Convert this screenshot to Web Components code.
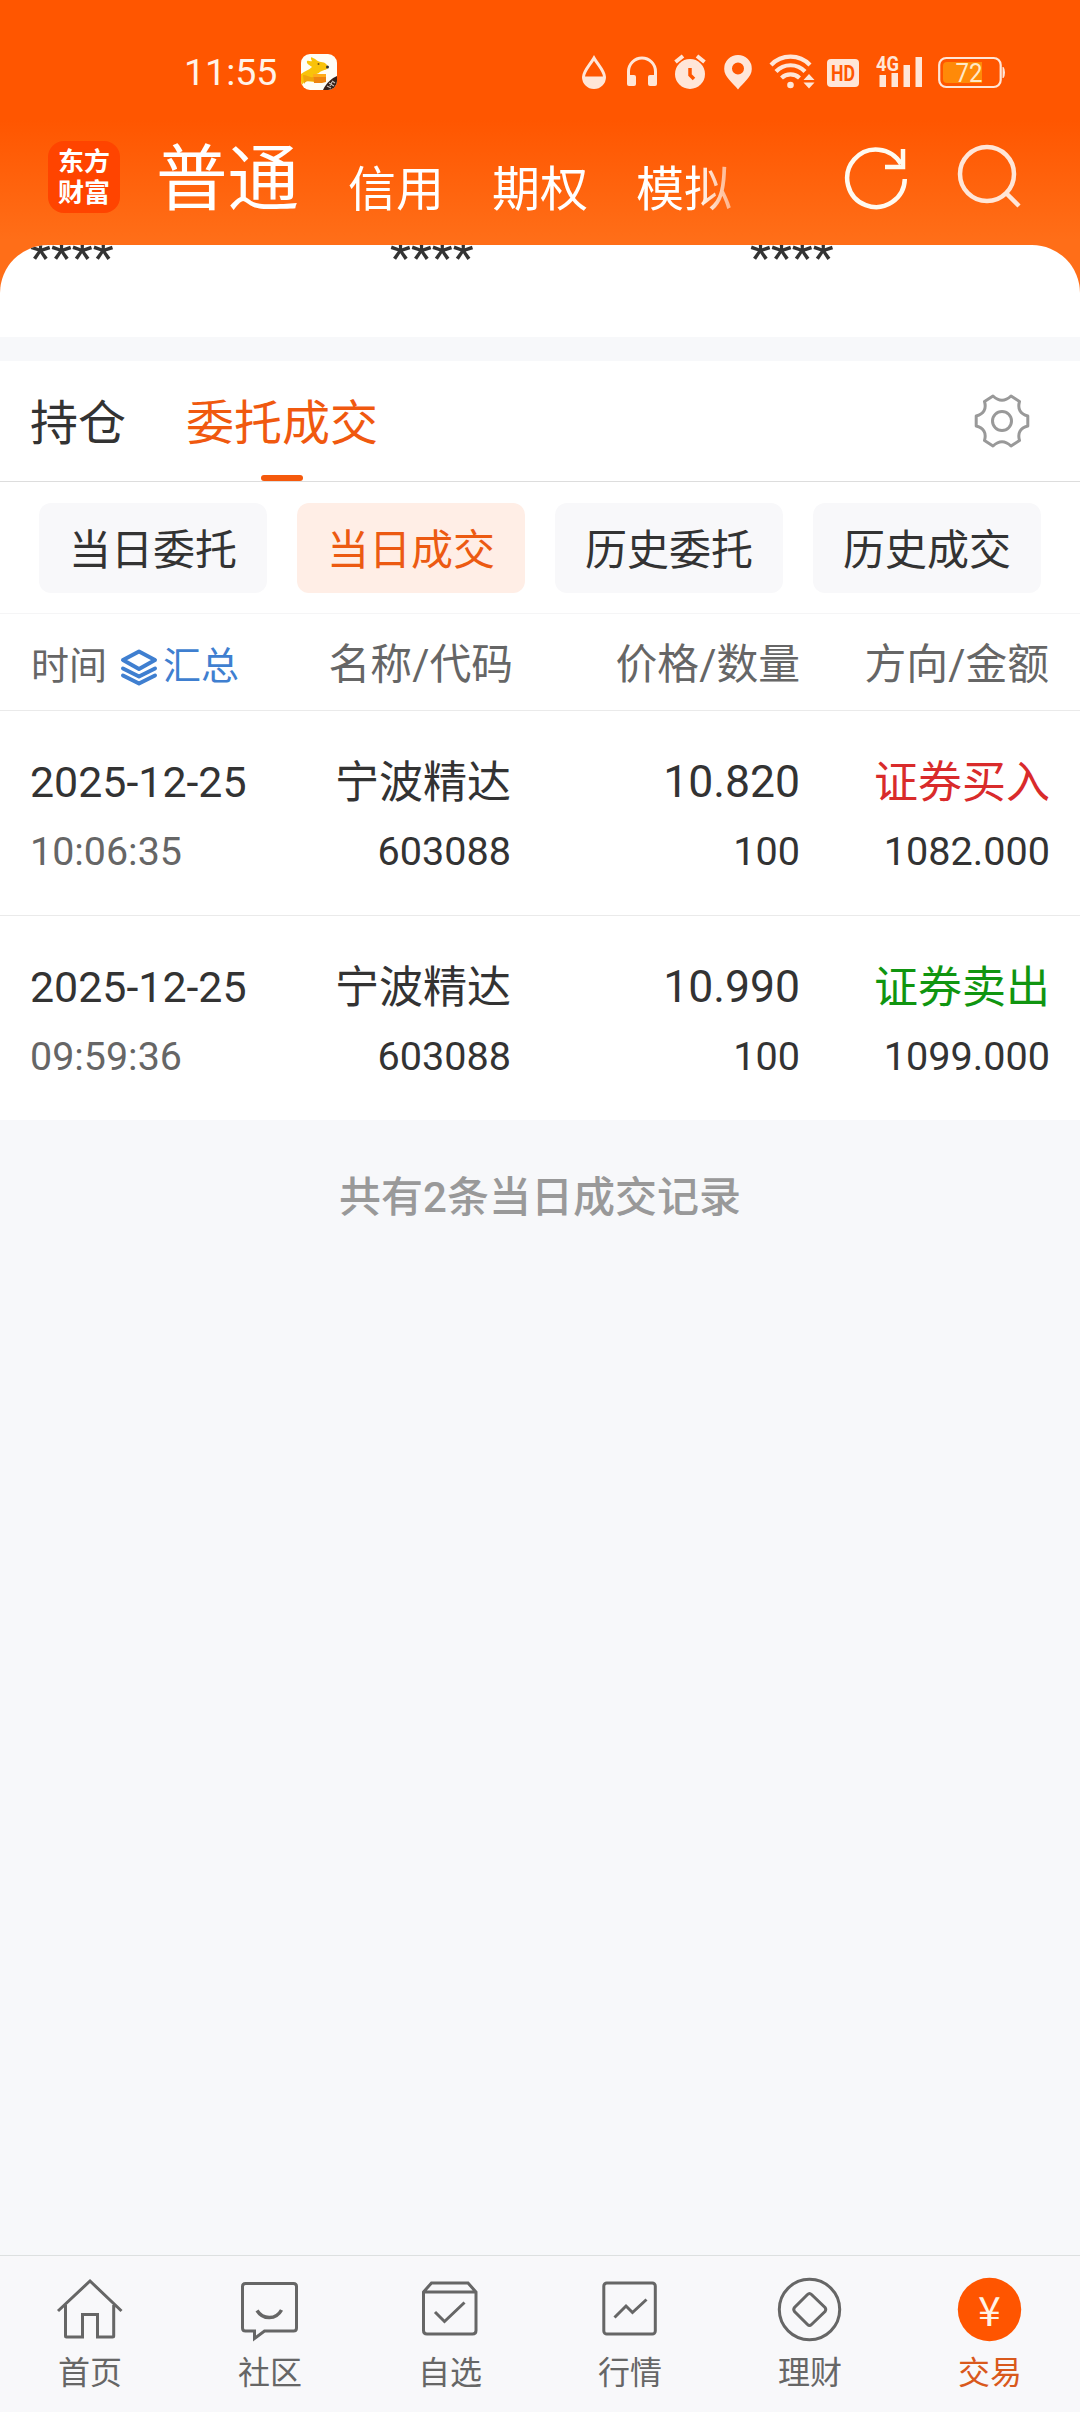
<!DOCTYPE html>
<html lang="zh-CN">
<head>
<meta charset="UTF-8">
<meta name="viewport" content="width=device-width, initial-scale=1.0">
<title>交易</title>
<style>
    body {
        margin: 0;
        background: #f7f8fa;
        color: #333;
        font-family: Roboto, "Noto Sans CJK SC", sans-serif;
    }
</style>
</head>
<body>
<trade-app>
    <status-bar slot="top"></status-bar>
    <account-bar slot="top">
        <account-tab active>普通</account-tab>
        <account-tab>信用</account-tab>
        <account-tab>期权</account-tab>
        <account-tab>模拟</account-tab>
    </account-bar>

    <asset-card>
        <span>****</span>
        <span>****</span>
        <span>****</span>
    </asset-card>

    <section-tabs>
        <section-tab>持仓</section-tab>
        <section-tab active>委托成交</section-tab>
    </section-tabs>

    <filter-bar>
        <filter-chip>当日委托</filter-chip>
        <filter-chip active>当日成交</filter-chip>
        <filter-chip>历史委托</filter-chip>
        <filter-chip>历史成交</filter-chip>
    </filter-bar>

    <trade-head></trade-head>

    <trade-row side="buy">
        <span slot="date">2025-12-25</span>
        <span slot="time">10:06:35</span>
        <span slot="name">宁波精达</span>
        <span slot="code">603088</span>
        <span slot="price">10.820</span>
        <span slot="count">100</span>
        <span slot="side">证券买入</span>
        <span slot="amount">1082.000</span>
    </trade-row>
    <trade-row side="sell">
        <span slot="date">2025-12-25</span>
        <span slot="time">09:59:36</span>
        <span slot="name">宁波精达</span>
        <span slot="code">603088</span>
        <span slot="price">10.990</span>
        <span slot="count">100</span>
        <span slot="side">证券卖出</span>
        <span slot="amount">1099.000</span>
    </trade-row>

    <list-summary>共有2条当日成交记录</list-summary>

    <bottom-nav slot="bottom">
        <nav-item icon="home">首页</nav-item>
        <nav-item icon="chat">社区</nav-item>
        <nav-item icon="box">自选</nav-item>
        <nav-item icon="chart">行情</nav-item>
        <nav-item icon="coin">理财</nav-item>
        <nav-item icon="trade" active>交易</nav-item>
    </bottom-nav>
</trade-app>

<script>
// Small helper: every element here only needs an open root with static markup
class BaseElement extends HTMLElement {
    constructor() {
        super();
        this.attachShadow({ mode: 'open' });
        this.shadowRoot.innerHTML = this.render();
    }

    render() {
        return '<slot></slot>';
    }
}

class TradeApp extends BaseElement {
    render() {
        return `
            <style>
                :host {
                    display: flex;
                    flex-direction: column;
                    height: 2412px;
                    overflow: hidden;
                }
                header {
                    height: 245px;
                    padding-bottom: 55px;
                    background: linear-gradient(#ff5600 0, #ff5600 120px, #ff6e18 240px, #ff6e18);
                }
                main {
                    flex: 1;
                    margin-top: -55px;
                }
            </style>
            <header><slot name="top"></slot></header>
            <main><slot></slot></main>
            <slot name="bottom"></slot>
        `;
    }
}
customElements.define('trade-app', TradeApp);

class StatusBar extends BaseElement {
    render() {
        return `
            <style>
                :host {
                    display: flex;
                    align-items: center;
                    height: 36px;
                    padding: 54px 74px 30px 184px;
                    color: #ffe6d8;
                }
                time {
                    width: 117px;
                    font-size: 37.5px;
                    line-height: 38px;
                    color: #fff3e8;
                }
                .icons {
                    display: flex;
                    margin-left: auto;
                }
                svg {
                    display: block;
                    height: 36px;
                    fill: currentColor;
                }
                .line {
                    fill: none;
                    stroke: currentColor;
                }
                .cut {
                    fill: none;
                    stroke: #ff5600;
                }
            </style>
            <time>11:55</time>
            <svg width="36" viewBox="0 0 36 36">
                <clipPath id="app"><rect width="36" height="36" rx="9"/></clipPath>
                <g clip-path="url(#app)">
                    <rect width="36" height="36" fill="#fffdf6"/>
                    <path fill="#f9c20a" d="M0 20C4 17 8 16 11 13C9 11 5 10 6 7C8 6 9 8 11 7C9 4 10 2 12 4C15 5 17 8 20 8C24 8 27 11 27 14C24 17 20 16 18 19L13 21L14 28L4 27L0 32Z"/>
                    <path fill="#f0a30c" d="M2 21C6 21 9 24 12 23L13 27C8 27 5 26 3 30Z"/>
                    <path fill="#ee8410" d="M12 20H25V28L21 29H13Z"/>
                    <path fill="#ffab1a" d="M12 20H25V23H12Z"/>
                    <circle cx="17.500" cy="10" r="1" fill="#7a5210"/>
                    <circle cx="26.500" cy="13" r="1.500" fill="#333"/>
                    <path fill="#352018" d="M22 36C25 29 31 24 36 22V36Z"/>
                    <path stroke="#c9beb6" stroke-width="1.200" d="M26 32L30 34M28 29L33 32M31 27L34 29M29 32L31 28"/>
                </g>
            </svg>
            <div class="icons">
                <!-- drop -->
                <svg width="45" viewBox="580 54 45 36">
                    <path class="line" stroke-width="3" d="M594 58C590 65 583.500 71 583.500 77A10.500 10.500 0 0 0 604.500 77C604.500 71 598 65 594 58Z"/>
                    <path d="M584 76.500H604A10 10.500 0 0 1 584 76.500Z"/>
                </svg>
                <!-- headphones -->
                <svg width="48" viewBox="625 54 48 36">
                    <path class="line" stroke-width="3" d="M628.500 82V71.500A13.500 13.500 0 0 1 655.500 71.500V82"/>
                    <rect x="627" y="75" width="9" height="11" rx="2"/>
                    <rect x="648" y="75" width="9" height="11" rx="2"/>
                </svg>
                <!-- alarm -->
                <svg width="49" viewBox="673 54 49 36">
                    <circle cx="690" cy="74" r="15"/>
                    <path class="line" stroke-width="4" d="M675.500 62L683 56M704.500 62L697 56"/>
                    <path class="cut" stroke-width="3.500" d="M690 68V75L694 79"/>
                </svg>
                <!-- location -->
                <svg width="46" viewBox="722 54 46 36">
                    <path fill-rule="evenodd" d="M738 55A13.800 13.800 0 0 1 751.800 69C751.800 77 743 83 738 89.500C733 83 724.200 77 724.200 69A13.800 13.800 0 0 1 738 55ZM738 62.500A6 6 0 1 0 738 74.500A6 6 0 1 0 738 62.500Z"/>
                </svg>
                <!-- wifi -->
                <svg width="57" viewBox="768 54 57 36">
                    <path class="line" stroke-width="4.200" d="M771 65A27 27 0 0 1 810 65M776 71.500A20 20 0 0 1 805 71.500M781.500 78A13 13 0 0 1 799.500 78"/>
                    <circle cx="790.500" cy="85" r="3.300"/>
                    <path d="M809 74L814.500 80H803.500ZM809 88.500L814.500 82.500H803.500Z"/>
                </svg>
                <!-- HD -->
                <svg width="49" viewBox="825 54 49 36">
                    <rect x="827" y="59" width="32" height="28" rx="4"/>
                    <text x="843" y="81" text-anchor="middle" textLength="24" lengthAdjust="spacingAndGlyphs" font-size="22" font-weight="700" fill="#ff5600">HD</text>
                </svg>
                <!-- signal -->
                <svg width="63" viewBox="874 54 63 36">
                    <text x="876" y="70.500" textLength="23" lengthAdjust="spacingAndGlyphs" font-size="20.500" font-weight="700">4G</text>
                    <path d="M879.500 75h6.500v12h-6.500zM891.500 73h6.500v14h-6.500zM903.500 65h6.500v22h-6.500zM915.500 57h6.500v30h-6.500z"/>
                </svg>
                <!-- battery -->
                <svg width="69" viewBox="937 54 69 36">
                    <rect class="line" stroke-width="2.200" x="939.200" y="58" width="61.500" height="29" rx="7"/>
                    <path d="M1002.500 67H1003.500Q1005 69 1005 72.500T1003.500 78H1002.500Z"/>
                    <path fill="#ff8a08" d="M947 62H982V83H947Q943 83 943 79V66Q943 62 947 62Z"/>
                    <text x="955.500" y="82" textLength="27" lengthAdjust="spacingAndGlyphs" font-size="25" fill="#ffe9c8">72</text>
                </svg>
            </div>
        `;
    }
}
customElements.define('status-bar', StatusBar);

class AccountBar extends BaseElement {
    render() {
        return `
            <style>
                :host {
                    display: flex;
                    height: 125px;
                    padding: 0 58px 0 48px;
                    color: #fff;
                }
                .logo {
                    display: flex;
                    flex-direction: column;
                    justify-content: center;
                    box-sizing: border-box;
                    width: 72px;
                    height: 72px;
                    margin: 21px 36px 0 0;
                    padding-top: 1px;
                    border-radius: 16px;
                    background: #ff4400;
                    font-size: 26px;
                    font-weight: 700;
                    line-height: 31px;
                    text-align: center;
                }
                nav {
                    display: flex;
                    align-items: baseline;
                    gap: 48px;
                    width: 624px;
                    height: 112px;
                    -webkit-mask-image: linear-gradient(90deg, #000 540px, transparent 610px);
                    mask-image: linear-gradient(90deg, #000 540px, transparent 610px);
                }
                .actions {
                    display: flex;
                    gap: 44px;
                    margin: 22px 0 0 auto;
                }
                svg {
                    width: 68px;
                    height: 68px;
                    fill: none;
                    stroke: #fffaf0;
                    stroke-width: 4.500;
                }
            </style>
            <div class="logo"><span>东方</span><span>财富</span></div>
            <nav><slot></slot></nav>
            <div class="actions">
                <svg viewBox="842 142 68 68"><path d="M904.800 179A28.800 28.800 0 1 1 901 164M903 149V167H885"/></svg>
                <svg viewBox="954 142 68 68" style="stroke:#ffe6d8"><circle cx="987" cy="174" r="27"/><path d="M1006 193L1019 206"/></svg>
            </div>
        `;
    }
}
customElements.define('account-bar', AccountBar);

class AccountTab extends BaseElement {
    render() {
        return `
            <style>
                :host {
                    display: block;
                    flex: none;
                    font-size: 48px;
                    line-height: 110px;
                    position: relative;
                    top: 2px;
                }
                :host([active]) {
                    font-size: 71.500px;
                    line-height: 117px;
                    padding: 1px 1px 0 0;
                    top: 0;
                }
            </style>
            <slot></slot>
        `;
    }
}
customElements.define('account-tab', AccountTab);

class AssetCard extends BaseElement {
    render() {
        return `
            <style>
                :host {
                    display: grid;
                    grid-template-columns: repeat(3, 360px);
                    height: 92px;
                    margin-bottom: 24px;
                    border-radius: 48px 48px 0 0;
                    background: #fff;
                    overflow: hidden;
                    font-size: 48.600px;
                    line-height: 26px;
                }
                ::slotted(span) {
                    padding-left: 30px;
                }
            </style>
            <slot></slot>
        `;
    }
}
customElements.define('asset-card', AssetCard);

class SectionTabs extends BaseElement {
    render() {
        return `
            <style>
                :host {
                    display: flex;
                    gap: 60px;
                    height: 120px;
                    padding: 0 48px 0 30px;
                    background: #fff;
                    border-bottom: 1px solid #ddd;
                }
                svg {
                    align-self: center;
                    margin-left: auto;
                    fill: none;
                    stroke: #999;
                    stroke-width: 3;
                    stroke-linejoin: round;
                }
            </style>
            <slot></slot>
            <svg width="60" height="60" viewBox="-30 -30 60 60">
                <circle r="9.500"/>
                <path d="M-9 -25Q0 -16.500 9 -25L17.500 -19.500Q14.300 -8.200 25.800 -5V5Q14.300 8.200 17.500 19.500L9 25Q0 16.500 -9 25L-17.500 19.500Q-14.300 8.200 -25.800 5V-5Q-14.300 -8.200 -17.500 -19.500Z"/>
            </svg>
        `;
    }
}
customElements.define('section-tabs', SectionTabs);

class SectionTab extends BaseElement {
    render() {
        return `
            <style>
                :host {
                    display: flex;
                    flex-direction: column;
                    align-items: center;
                    font-size: 48px;
                    line-height: 114px;
                }
                :host([active]) {
                    color: #f0590f;
                }
                :host([active])::after {
                    content: "";
                    width: 42px;
                    height: 6px;
                    border-radius: 3px;
                    background: #f5590c;
                }
                slot {
                    display: block;
                    padding-top: 6px;
                    margin-bottom: -6px;
                }
            </style>
            <slot></slot>
        `;
    }
}
customElements.define('section-tab', SectionTab);

class FilterBar extends BaseElement {
    render() {
        return `
            <style>
                :host {
                    display: flex;
                    gap: 30px;
                    padding: 21px 39px 20px;
                    background: #fff;
                    border-bottom: 1px solid #f5f5f6;
                }
            </style>
            <slot></slot>
        `;
    }
}
customElements.define('filter-bar', FilterBar);

class FilterChip extends BaseElement {
    render() {
        return `
            <style>
                :host {
                    display: block;
                    flex: 1;
                    box-sizing: border-box;
                    height: 90px;
                    border-radius: 12px;
                    background: #f8f8fa;
                    font-size: 42px;
                    line-height: 95px;
                    text-align: center;
                }
                :host([active]) {
                    background: #ffeee6;
                    color: #ec5a12;
                }
            </style>
            <slot></slot>
        `;
    }
}
customElements.define('filter-chip', FilterChip);

class TradeHead extends BaseElement {
    render() {
        return `
            <style>
                :host {
                    display: grid;
                    grid-template-columns: 232px 251px 287px 249px;
                    height: 96px;
                    padding: 0 31px 0 30px;
                    background: #fff;
                    border-bottom: 1px solid #eaeaea;
                    color: #666;
                    font-size: 41.800px;
                    line-height: 101px;
                    text-align: right;
                }
                .time {
                    display: flex;
                    align-items: center;
                    font-size: 38px;
                    padding: 2px 0 0 1px;
                    white-space: nowrap;
                }
                .sum {
                    color: #3f7fd0;
                }
                svg {
                    margin: 0 5px 0 13px;
                    flex: none;
                    fill: none;
                    stroke: #3f7fd0;
                    stroke-width: 4;
                    stroke-linecap: round;
                    stroke-linejoin: round;
                }
            </style>
            <div class="time">
                <span>时间</span>
                <svg width="38" height="38" viewBox="0 0 38 38">
                    <path d="M19 3.500L35 12L19 21L3 12ZM3 20.500L19 28.500L35 20.500M3 27.500L19 35.500L35 27.500"/>
                </svg>
                <span class="sum">汇总</span>
            </div>
            <div>名称/代码</div>
            <div>价格/数量</div>
            <div>方向/金额</div>
        `;
    }
}
customElements.define('trade-head', TradeHead);

class TradeRow extends BaseElement {
    render() {
        return `
            <style>
                :host {
                    display: grid;
                    grid-template-columns: 231px 250px 289px 250px;
                    align-content: start;
                    row-gap: 10px;
                    height: 163px;
                    padding: 41px 30px 0;
                    background: #fff;
                    border-bottom: 1px solid #eaeaea;
                    font-size: 44px;
                    line-height: 60px;
                    text-align: right;
                }
                :host(:last-of-type) {
                    border-bottom: none;
                }
                .cn {
                    height: 60px;
                    line-height: 63px;
                }
                .sub {
                    font-size: 39.600px;
                }
                .date {
                    font-size: 42.900px;
                    text-align: left;
                }
                .time {
                    font-size: 39.400px;
                    text-align: left;
                    color: #666;
                }
                .price {
                    font-size: 44.500px;
                }
                :host([side="buy"]) .side {
                    color: #d92b2b;
                }
                :host([side="sell"]) .side {
                    color: #109510;
                }
            </style>
            <div class="date"><slot name="date"></slot></div>
            <div class="cn"><slot name="name"></slot></div>
            <div class="price"><slot name="price"></slot></div>
            <div class="cn side"><slot name="side"></slot></div>
            <div class="time"><slot name="time"></slot></div>
            <div class="sub"><slot name="code"></slot></div>
            <div class="sub"><slot name="count"></slot></div>
            <div class="sub"><slot name="amount"></slot></div>
        `;
    }
}
customElements.define('trade-row', TradeRow);

class ListSummary extends BaseElement {
    render() {
        return `
            <style>
                :host {
                    display: block;
                    padding-top: 48px;
                    color: #999;
                    font-size: 42px;
                    font-weight: 500;
                    line-height: 60px;
                    text-align: center;
                }
            </style>
            <slot></slot>
        `;
    }
}
customElements.define('list-summary', ListSummary);

class BottomNav extends BaseElement {
    render() {
        return `
            <style>
                :host {
                    display: flex;
                    height: 156px;
                    background: #f8f8fa;
                    border-top: 1px solid #dde0e0;
                }
            </style>
            <slot></slot>
        `;
    }
}
customElements.define('bottom-nav', BottomNav);

const NAV_ICONS = {
    home: '<path d="M4 35L36 5L67.500 35M11.500 29V60Q11.500 61 12.500 61H28.500V38.500H43.500V61H58.500Q59.700 61 59.700 60V29"/>',
    chat: '<path d="M11.500 7.500H59.500Q62.500 7.500 62.500 10.500V52Q62.500 55 59.500 55H30.500L20.500 62.500V55H11.500Q8.500 55 8.500 52V10.500Q8.500 7.500 11.500 7.500Z"/><path stroke-width="3.500" d="M23 34.500C29 44 42 44 47.500 34"/>',
    box: '<path d="M9.500 16L17.500 7H54L62 16V54.500Q62 58 58.500 58H13Q9.500 58 9.500 54.500ZM9.500 16H62M21 36L30.500 45.500L50.500 26.500"/>',
    chart: '<rect x="9.800" y="7" width="51.500" height="51" rx="3"/><path d="M20.500 41.500L32 30L38.500 36.500L52.500 23.500"/>',
    coin: '<circle cx="35.500" cy="33.500" r="30.200"/><path d="M33.500 18.500Q35.500 16.500 37.500 18.500L51 31.500Q52.500 33.500 51 35.500L37.500 48.500Q35.500 50.500 33.500 48.500L20.500 35.500Q19 33.500 20.500 31.500Z"/>',
    trade: '<circle cx="35.500" cy="33.500" r="31.700" fill="#ff5500" stroke="none"/><text x="35.500" y="49.500" text-anchor="middle" font-family="Noto Sans CJK SC" font-size="41" fill="#fff3e6" stroke="none">¥</text>'
};

class NavItem extends BaseElement {
    render() {
        return `
            <style>
                :host {
                    display: flex;
                    flex-direction: column;
                    align-items: center;
                    gap: 11px;
                    width: 180px;
                    padding-top: 20px;
                    color: #666;
                    font-size: 32px;
                    line-height: 40px;
                }
                :host([active]) {
                    color: #d9591c;
                }
                svg {
                    fill: none;
                    stroke: #666;
                    stroke-width: 3;
                }
            </style>
            <svg width="72" height="66" viewBox="0 0 72 66"></svg>
            <slot></slot>
        `;
    }

    connectedCallback() {
        this.shadowRoot.querySelector('svg').innerHTML = NAV_ICONS[this.getAttribute('icon')];
    }
}
customElements.define('nav-item', NavItem);
</script>
</body>
</html>
